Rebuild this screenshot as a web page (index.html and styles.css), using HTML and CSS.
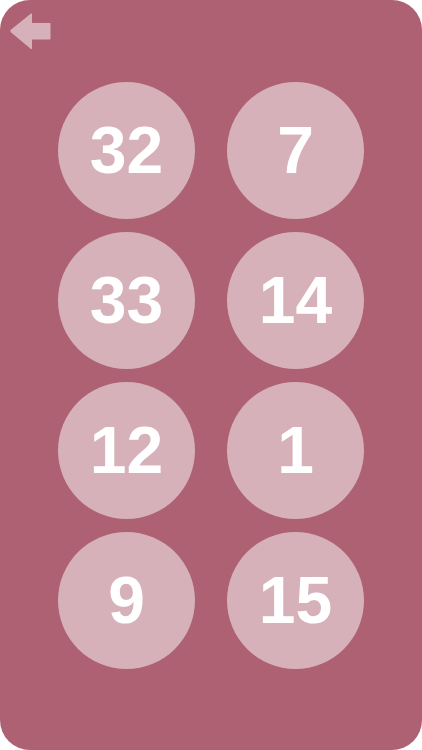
FILE: index.html
```html
<!DOCTYPE html>
<html>
<head>
<meta charset="utf-8">
<link rel="stylesheet" href="styles.css">
</head>
<body>
<div class="screen">
  <div class="header">
    <svg class="back" width="42" height="38" viewBox="0 0 42 38">
      <path d="M1.5 18 L22 1.5 L23 1.5 L23 11 L41 11 L41.5 11.5 L41.5 27 L41 27.5 L23 27.5 L23 37 L22 37 L1.5 20 Z" fill="#d6b1b9"/>
    </svg>
  </div>
  <div class="grid">
    <div class="ball">32</div>
    <div class="ball">7</div>
    <div class="ball">33</div>
    <div class="ball">14</div>
    <div class="ball">12</div>
    <div class="ball">1</div>
    <div class="ball">9</div>
    <div class="ball">15</div>
  </div>
</div>
</body>
</html>
```
FILE: styles.css
```css
html, body {
  margin: 0;
  padding: 0;
  background: #ffffff;
}
.screen {
  width: 422px;
  height: 750px;
  background: #ad6172;
  border-radius: 30px;
  overflow: hidden;
  display: flex;
  flex-direction: column;
}
.header {
  height: 82px;
  padding: 12px 0 0 9px;
  box-sizing: border-box;
}
.back {
  display: block;
}
.grid {
  display: grid;
  grid-template-columns: 137px 137px;
  column-gap: 32px;
  row-gap: 13px;
  justify-content: center;
}
.ball {
  width: 137px;
  height: 137px;
  border-radius: 50%;
  background: #d6b1b9;
  color: #ffffff;
  display: flex;
  align-items: center;
  justify-content: center;
  font-family: "Liberation Sans", Arial, sans-serif;
  font-weight: bold;
  font-size: 66px;
  line-height: 1;
  padding-bottom: 2px;
  box-sizing: border-box;
}
```
